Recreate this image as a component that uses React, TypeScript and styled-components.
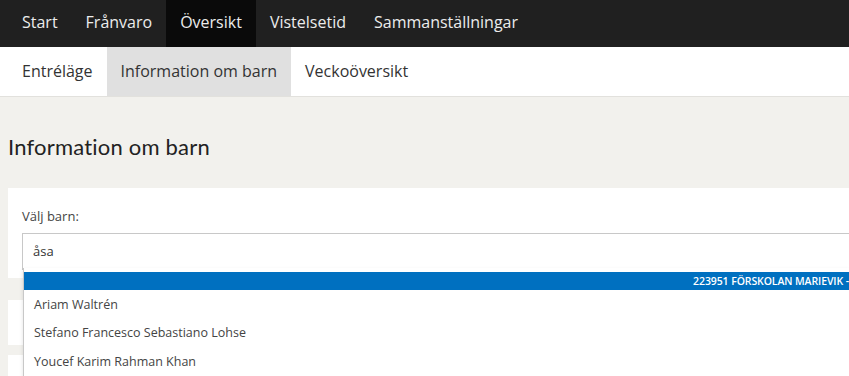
import React from "react";
import styled, { createGlobalStyle } from "styled-components";

const Global = createGlobalStyle`
  html, body { margin: 0; padding: 0; overflow: hidden; background: #f2f1ed; }
  body { font-family: "Open Sans", "Liberation Sans", sans-serif; }
`;

const Page = styled.div`
  width: 849px;
  min-height: 376px;
  background: #f2f1ed;
  overflow: hidden;
`;

const TopNav = styled.nav`
  display: flex;
  height: 47px;
  background: #202020;
  padding-left: 8px;
`;

const TopItem = styled.a<{ $active?: boolean }>`
  display: flex;
  align-items: center;
  padding: 0 14px 4px;
  font-size: 16px;
  color: #ececec;
  background: ${(p) => (p.$active ? "#0a0a0a" : "transparent")};
  text-decoration: none;
`;

const SubNav = styled.nav`
  display: flex;
  height: 49px;
  background: #fff;
  padding-left: 8px;
  border-bottom: 1px solid #e2e1dd;
`;

const SubItem = styled.a<{ $active?: boolean }>`
  display: flex;
  align-items: center;
  padding: 0 14px 1px;
  font-size: 16px;
  color: #333;
  background: ${(p) => (p.$active ? "#e0e0e0" : "transparent")};
  text-decoration: none;
`;

const Main = styled.main`
  padding: 0 0 0 8px;
`;

const Heading = styled.h1`
  margin: 0;
  padding: 36px 0 0;
  height: 55px;
  font-family: "Lato", "Noto Sans", sans-serif;
  font-weight: 400;
  font-size: 22px;
  letter-spacing: 0.2px;
  color: #222;
`;

const Stack = styled.div`
  display: flex;
  flex-direction: column;
`;

const Panel = styled.section<{ $h: number; $gap: number }>`
  background: #fff;
  height: ${(p) => p.$h}px;
  margin-bottom: ${(p) => p.$gap}px;
  padding: 0 0 0 14px;
  box-sizing: border-box;
`;

const Label = styled.label`
  display: block;
  padding-top: 19px;
  height: 26px;
  font-size: 13px;
  color: #444;
`;

const Field = styled.div`
  position: relative;
`;

const Input = styled.div`
  height: 33px;
  border: 1px solid #c8c8c8;
  border-right: none;
  background: #fff;
  display: flex;
  align-items: center;
  padding: 0 10px 2px;
  font-size: 13px;
  color: #333;
`;

const Dropdown = styled.ul`
  position: absolute;
  left: 1px;
  right: 0;
  top: 35px;
  margin: 0;
  padding: 4px 0 0;
  list-style: none;
  background: #fff;
  border-left: 1px solid #c8c8c8;
  box-shadow: 0 2px 4px rgba(0, 0, 0, 0.12);
  z-index: 2;
  height: 200px;
`;

const GroupHeader = styled.li`
  height: 18px;
  background: #0070c0;
  color: #fff;
  font-size: 10.5px;
  font-weight: 600;
  display: flex;
  align-items: center;
  justify-content: flex-end;
  padding-right: 0;
  white-space: nowrap;
  letter-spacing: -0.1px;
`;

const Option = styled.li`
  height: 28.5px;
  display: flex;
  align-items: center;
  padding-left: 10px;
  font-size: 12.5px;
  color: #444;
`;

export default function App() {
  return (
    <Page>
      <Global />
      <TopNav>
        <TopItem>Start</TopItem>
        <TopItem>Frånvaro</TopItem>
        <TopItem $active>Översikt</TopItem>
        <TopItem>Vistelsetid</TopItem>
        <TopItem>Sammanställningar</TopItem>
      </TopNav>
      <SubNav>
        <SubItem>Entréläge</SubItem>
        <SubItem $active>Information om barn</SubItem>
        <SubItem>Veckoöversikt</SubItem>
      </SubNav>
      <Main>
        <Heading>Information om barn</Heading>
        <Stack>
          <Panel $h={90} $gap={22}>
            <Label>Välj barn:</Label>
            <Field>
              <Input>åsa</Input>
              <Dropdown>
                <GroupHeader>223951 FÖRSKOLAN MARIEVIK -</GroupHeader>
                <Option>Ariam Waltrén</Option>
                <Option>Stefano Francesco Sebastiano Lohse</Option>
                <Option>Youcef Karim Rahman Khan</Option>
              </Dropdown>
            </Field>
          </Panel>
          <Panel $h={45} $gap={10} />
          <Panel $h={60} $gap={0} />
        </Stack>
      </Main>
    </Page>
  );
}
